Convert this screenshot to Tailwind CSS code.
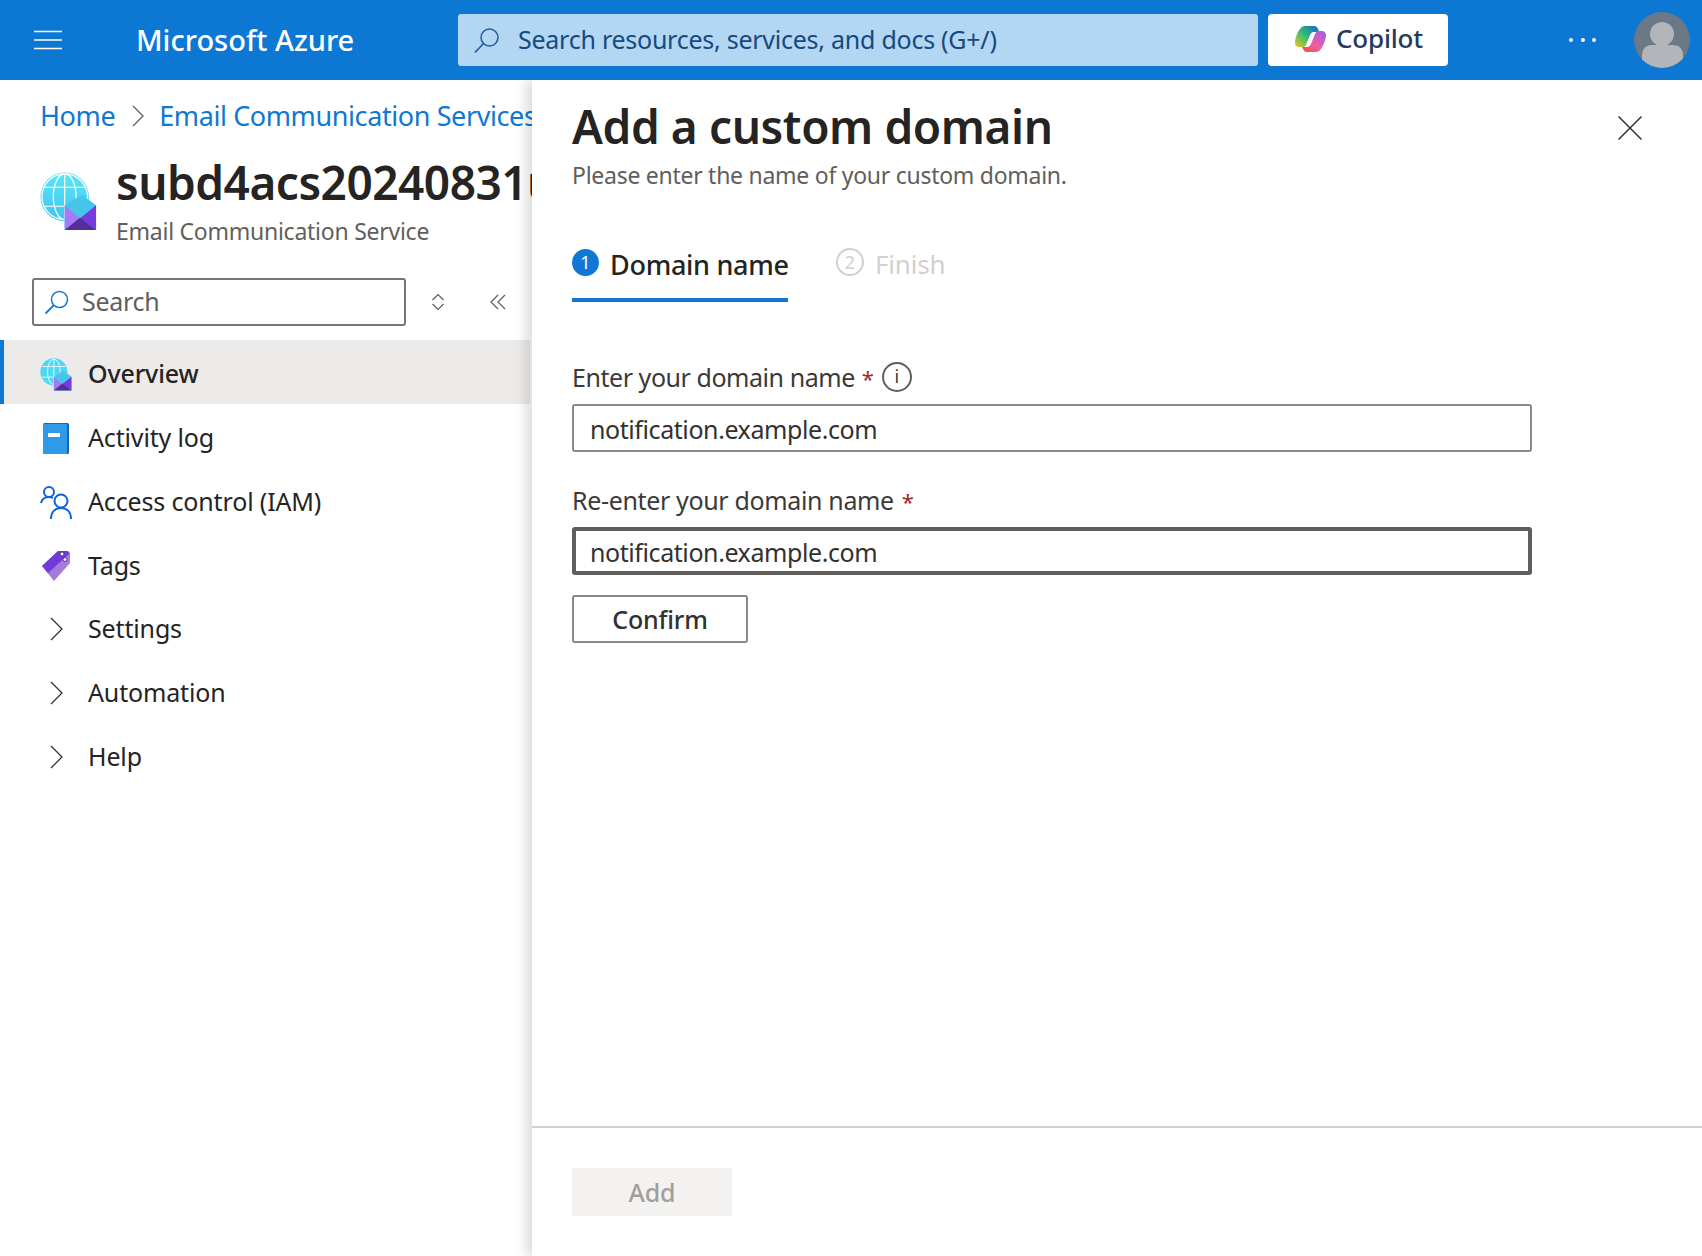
<!DOCTYPE html>
<html lang="en">
<head>
    <meta charset="UTF-8">
    <meta name="viewport" content="width=device-width, initial-scale=1.0">
    <title>Add a custom domain - Microsoft Azure</title>
    <script src="https://cdn.jsdelivr.net/npm/@tailwindcss/browser@4"></script>
</head>
<body class="h-screen overflow-hidden bg-white font-['Noto_Sans',sans-serif] text-[#252423] flex flex-col">
    <!-- Top bar -->
    <header class="h-[80px] shrink-0 bg-[#0c78d4] flex items-center relative z-20">
        <div class="w-[136px] shrink-0 pl-[34px]">
            <svg width="28" height="20" viewBox="0 0 28 20" class="block"><path d="M0 1.500h28M0 10h28M0 18.500h28" stroke="#fff" stroke-width="1.500" fill="none"/></svg>
        </div>
        <div class="w-[322px] shrink-0 text-white text-[29px] font-medium">Microsoft Azure</div>
        <div class="w-[800px] h-[52px] shrink-0 bg-[#b3d6f2] rounded-[3px] flex items-center pl-[15px] gap-[18px]">
            <svg width="27" height="27" viewBox="0 0 27 27"><circle cx="16.500" cy="10.500" r="8.500" fill="none" stroke="#1f5e9c" stroke-width="1.500"/><path d="M10.500 16.500L2 25.500" stroke="#1f5e9c" stroke-width="1.700" fill="none"/></svg>
            <span class="text-[25px] text-[#134a80] tracking-[-0.25px]">Search resources, services, and docs (G+/)</span>
        </div>
        <div class="ml-[10px] w-[180px] h-[52px] shrink-0 bg-white rounded-[4px] flex items-center pl-[27px] gap-[10px]">
            <svg width="31" height="28" viewBox="0 0 31 28" class="-mt-[3px]">
                <defs>
                    <linearGradient id="copA" x1="0" y1="1" x2="1" y2="0"><stop offset="0" stop-color="#f5c518"/><stop offset=".45" stop-color="#37c26f"/><stop offset="1" stop-color="#1560d8"/></linearGradient>
                    <linearGradient id="copB" x1="1" y1="0" x2="0" y2="1"><stop offset="0" stop-color="#9a5be8"/><stop offset=".55" stop-color="#ee5fa7"/><stop offset="1" stop-color="#f3502d"/></linearGradient>
                </defs>
                <path d="M10 1h9c2 0 3 1 4 3l1 3h-5c-2 0-3 1-4 3l-4 10c-1 2-2 2-4 2H4c-3 0-4-2-4-5 0-4 3-11 5-13 1-2 3-3 5-3z" fill="url(#copA)"/>
                <path d="M21 27h-9c-2 0-3-1-4-3l-1-2h5c2 0 3-1 4-3l4-10c1-2 2-3 4-3h3c2 0 4 2 4 4 0 5-3 11-5 14-1 2-3 3-5 3z" fill="url(#copB)"/>
            </svg>
            <span class="text-[26px] font-medium text-[#243a5e] tracking-[-0.2px] -mt-[4px]">Copilot</span>
        </div>
        <div class="ml-[121px] w-[27px] flex justify-between shrink-0">
            <span class="w-[4px] h-[4px] rounded-full bg-white"></span>
            <span class="w-[4px] h-[4px] rounded-full bg-white"></span>
            <span class="w-[4px] h-[4px] rounded-full bg-white"></span>
        </div>
        <div class="ml-[38px] w-[56px] h-[56px] shrink-0 rounded-full bg-[#6b7885] overflow-hidden">
            <svg width="56" height="56" viewBox="0 0 56 56"><circle cx="28" cy="22" r="12" fill="#b2b6ba"/><path d="M8 56V43c0-6 4-10 10-10h21c6 0 10 4 10 10v13z" fill="#b2b6ba"/></svg>
        </div>
    </header>

    <div class="flex-1 flex min-h-0">
        <!-- Resource menu -->
        <aside class="w-[532px] shrink-0 overflow-hidden">
            <div class="h-[72px] pl-[40px] flex items-center whitespace-nowrap text-[#0f78d4] text-[27px] tracking-[-0.4px]">
                <span>Home</span>
                <svg width="14" height="22" viewBox="0 0 14 22" class="ml-[16px] mr-[14px] shrink-0"><path d="M2 1l10 10L2 21" stroke="#605e5c" stroke-width="1.300" fill="none"/></svg>
                <span>Email Communication Services</span>
            </div>
            <div class="flex pl-[40px] h-[106px] whitespace-nowrap">
                <svg width="57" height="59" viewBox="0 0 60 62" class="mt-[20px] shrink-0">
                    <defs>
                        <linearGradient id="globeA" x1="0" y1="0" x2="0" y2="1"><stop offset="0" stop-color="#5fe6f7"/><stop offset="1" stop-color="#3cc4ee"/></linearGradient>
                    </defs>
                    <circle cx="26" cy="26" r="25.500" fill="url(#globeA)"/>
                    <g fill="none" stroke="#fff" stroke-width="1.300"><circle cx="26" cy="26" r="24"/><ellipse cx="26" cy="26" rx="12" ry="24"/><path d="M26 2v48M4 16h44M4 36h44"/></g>
                    <path d="M44 24l15 11v26H26V35z" fill="#45c6e8"/>
                    <path d="M26 35l16 14-16 12z" fill="#a67af4"/>
                    <path d="M59 35L42 49l17 12z" fill="#773adc"/>
                    <path d="M26 61l16-13 17 13z" fill="#552f99"/>
                </svg>
                <div class="ml-[19px] min-w-0">
                    <div class="text-[46px] font-semibold leading-[64px] -mt-[2px] tracking-[-0.5px]">subd4acs20240831u</div>
                    <div class="text-[23px] leading-[32px] text-[#605e5c] tracking-[-0.25px] mt-[1px]">Email Communication Service</div>
                </div>
            </div>
            <div class="flex items-center pl-[32px] mt-[20px] h-[48px]">
                <div class="w-[374px] h-[48px] shrink-0 border-2 border-[#77757a] rounded-[3px] flex items-center pl-[10px] gap-[13px]">
                    <svg width="25" height="25" viewBox="0 0 25 25"><circle cx="15.500" cy="9.500" r="8" fill="none" stroke="#0f78d4" stroke-width="1.500"/><path d="M10 15L1.500 23.500" stroke="#0f78d4" stroke-width="1.800" fill="none"/></svg>
                    <span class="text-[25px] text-[#605e5c] tracking-[-0.3px]">Search</span>
                </div>
                <svg width="14" height="18" viewBox="0 0 14 18" class="ml-[25px]"><path d="M1.500 7L7 1.500 12.500 7M1.500 11L7 16.500 12.500 11" stroke="#605e5c" stroke-width="1.200" fill="none"/></svg>
                <svg width="16" height="16" viewBox="0 0 16 16" class="ml-[45px]"><path d="M8 1L1 8l7 7M15 1L8 8l7 7" stroke="#605e5c" stroke-width="1.200" fill="none"/></svg>
            </div>
            <nav class="mt-[14px] text-[25px] tracking-[-0.15px] mr-[2px]">
                <div class="h-[64px] pt-[4px] bg-[#edebe9] border-l-4 border-[#0f78d4] flex items-center font-medium">
                    <svg width="32" height="33" viewBox="0 0 60 62" class="ml-[36px] shrink-0">
                        <circle cx="26" cy="26" r="25.500" fill="#4fd8f2"/>
                        <g fill="none" stroke="#fff" stroke-width="1.500"><ellipse cx="26" cy="26" rx="12" ry="24"/><path d="M26 2v48M4 16h44M4 36h44"/></g>
                        <path d="M44 24l15 11v26H26V35z" fill="#45c6e8"/>
                        <path d="M26 35l16 14-16 12z" fill="#a67af4"/>
                        <path d="M59 35L42 49l17 12z" fill="#773adc"/>
                        <path d="M26 61l16-13 17 13z" fill="#552f99"/>
                    </svg>
                    <span class="ml-[16px]">Overview</span>
                </div>
                <div class="h-[64px] pt-[4px] flex items-center">
                    <svg width="26" height="31" viewBox="0 0 26 31" class="ml-[43px] shrink-0">
                        <rect x="0" y="0" width="26" height="31" rx="1.500" fill="#1566b8"/>
                        <rect x="0" y="1" width="24" height="30" rx="1" fill="#2f9be8"/>
                        <rect x="5" y="10" width="12" height="4" fill="#fff"/>
                    </svg>
                    <span class="ml-[19px]">Activity log</span>
                </div>
                <div class="h-[64px] pt-[4px] flex items-center">
                    <svg width="33" height="33" viewBox="0 0 33 33" class="ml-[40px] shrink-0 fill-none stroke-[#0f63d8]" stroke-width="2">
                        <circle cx="9" cy="6" r="5"/>
                        <path d="M1 17c1-4 4-6 8-6 2 0 3 .5 4 1"/>
                        <circle cx="21" cy="15" r="6.500"/>
                        <path d="M11 33c0-7 4-11 10-11s10 4 10 11"/>
                    </svg>
                    <span class="ml-[15px]">Access control (IAM)</span>
                </div>
                <div class="h-[64px] pt-[4px] flex items-center">
                    <svg width="30" height="32" viewBox="0 0 30 32" class="ml-[41px] shrink-0">
                        <path d="M17 1h9c2 0 3 1 3 3v9L13 31 1 16z" fill="#a67ad8"/>
                        <path d="M17 1h8c2 0 3 1 3 3L7 23 1 16z" fill="#6f3ad6"/>
                        <circle cx="21" cy="4" r="2" fill="#fff" stroke="#552f99"/>
                        <circle cx="24" cy="9.500" r="2" fill="#fff" stroke="#552f99"/>
                    </svg>
                    <span class="ml-[17px]">Tags</span>
                </div>
                <div class="h-[64px] pt-[2px] flex items-center">
                    <svg width="14" height="24" viewBox="0 0 14 24" class="ml-[49px] shrink-0"><path d="M2 1l11 11L2 23" stroke="#323130" stroke-width="1.300" fill="none"/></svg>
                    <span class="ml-[25px]">Settings</span>
                </div>
                <div class="h-[64px] pt-[2px] flex items-center">
                    <svg width="14" height="24" viewBox="0 0 14 24" class="ml-[49px] shrink-0"><path d="M2 1l11 11L2 23" stroke="#323130" stroke-width="1.300" fill="none"/></svg>
                    <span class="ml-[25px]">Automation</span>
                </div>
                <div class="h-[64px] pt-[2px] flex items-center">
                    <svg width="14" height="24" viewBox="0 0 14 24" class="ml-[49px] shrink-0"><path d="M2 1l11 11L2 23" stroke="#323130" stroke-width="1.300" fill="none"/></svg>
                    <span class="ml-[25px]">Help</span>
                </div>
            </nav>
        </aside>

        <!-- Context pane -->
        <section class="flex-1 min-w-0 flex flex-col relative z-10 bg-white shadow-[-6px_0_12px_rgba(0,0,0,0.14)]">
            <div class="flex-1 pl-[40px]">
                <div class="flex justify-between">
                    <h1 class="text-[46px] font-semibold leading-[64px] mt-[14px] tracking-[-0.4px]">Add a custom domain</h1>
                    <svg width="24" height="24" viewBox="0 0 24 24" class="mt-[36px] mr-[60px]"><path d="M.500.500l23 23M23.500.500l-23 23" stroke="#323130" stroke-width="1.500" fill="none"/></svg>
                </div>
                <p class="mt-[1px] text-[23px] leading-[32px] text-[#605e5c] tracking-[-0.27px]">Please enter the name of your custom domain.</p>

                <div class="flex mt-[46px] h-[65px] whitespace-nowrap">
                    <div class="w-[216px] border-b-4 border-[#0f78d4] flex items-start pt-[12px]">
                        <span class="w-[27px] h-[27px] shrink-0 rounded-full bg-[#0f78d4] text-white text-[18px] leading-[27px] text-center">1</span>
                        <span class="ml-[11px] text-[27px] font-medium leading-[32px] tracking-[-0.3px]">Domain name</span>
                    </div>
                    <div class="ml-[48px] flex items-start pt-[11px] text-[#d2d0ce]">
                        <span class="w-[28px] h-[28px] shrink-0 rounded-full border-2 border-[#d2d0ce] text-[18px] leading-[24px] text-center">2</span>
                        <span class="ml-[11px] text-[26px] leading-[32px] tracking-[-0.2px]">Finish</span>
                    </div>
                </div>

                <div class="mt-[54px] flex items-center h-[44px] text-[25px] text-[#3b3a39] tracking-[-0.45px]">
                    <span>Enter your domain name</span>
                    <span class="ml-[7px] text-[22px] text-[#a4262c]">*</span>
                    <span class="ml-[8px] w-[30px] h-[30px] rounded-full border-2 border-[#605e5c] text-[18px] leading-[25px] text-center -mt-[2px]">i</span>
                </div>
                <div class="mt-[4px] w-[960px] h-[48px] pt-[4px] border-2 border-[#8a8886] rounded-[3px] flex items-center pl-[16px] text-[25px] tracking-[-0.42px] text-[#323130]">notification.example.com</div>

                <div class="mt-[27px] flex items-center h-[44px] text-[25px] text-[#3b3a39] tracking-[-0.35px]">
                    <span>Re-enter your domain name</span>
                    <span class="ml-[8px] text-[22px] text-[#a4262c]">*</span>
                </div>
                <div class="mt-[4px] w-[960px] h-[48px] pt-[4px] border-4 border-[#605e5c] rounded-[3px] flex items-center pl-[14px] text-[25px] tracking-[-0.42px] text-[#323130]">notification.example.com</div>

                <button class="mt-[20px] w-[176px] h-[48px] pt-[2px] border-2 border-[#8a8886] rounded-[3px] bg-white text-[25px] font-medium tracking-[-0.2px] text-[#323130]">Confirm</button>
            </div>
            <div class="h-[130px] shrink-0 border-t-2 border-[#d2d0ce] pl-[40px] pt-[40px]">
                <button class="w-[160px] h-[48px] pt-[2px] bg-[#f3f2f1] rounded-[3px] text-[25px] font-medium tracking-[-0.2px] text-[#a19f9d]">Add</button>
            </div>
        </section>
    </div>
</body>
</html>
